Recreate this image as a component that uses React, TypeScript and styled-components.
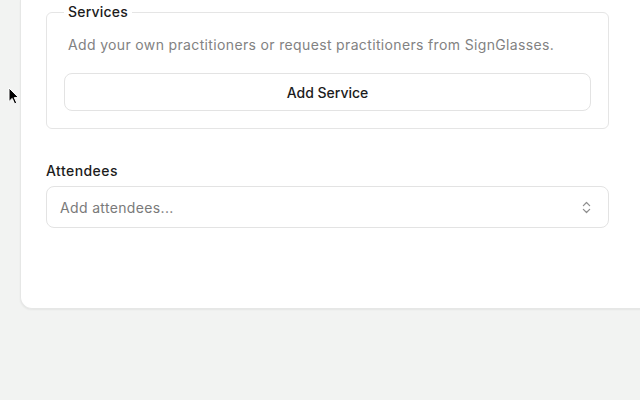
import React from "react";
import styled, { createGlobalStyle } from "styled-components";

const GlobalStyle = createGlobalStyle`
  html, body {
    margin: 0;
    padding: 0;
    background: #f2f3f2;
    font-family: Inter, "Liberation Sans", sans-serif;
    overflow: hidden;
  }
`;

const Page = styled.div`
  position: relative;
  width: 640px;
  height: 400px;
  padding-left: 20px;
  box-sizing: border-box;
  overflow: hidden;
`;

const Card = styled.div`
  width: 640px;
  box-sizing: border-box;
  background: #fff;
  border: 1px solid #e6e7e6;
  border-top: none;
  border-radius: 0 0 12px 12px;
  box-shadow: 0 1px 2px rgba(0, 0, 0, 0.06);
  padding: 2px 50px 80px 25px;
`;

const Fieldset = styled.fieldset`
  margin: 0;
  border: 1px solid #e5e5e5;
  border-radius: 6px;
  padding: 0 17px 17px;
  display: flex;
  flex-direction: column;
`;

const Legend = styled.legend`
  padding: 0 4px;
  font-size: 14px;
  line-height: 20px;
  font-weight: 500;
  letter-spacing: 0.2px;
  color: #1c1c1c;
`;

const Description = styled.p`
  margin: 13px 0 18px;
  padding: 0 4px;
  font-size: 14px;
  line-height: 20px;
  letter-spacing: 0.35px;
  color: #828282;
`;

const Button = styled.button`
  height: 38px;
  border: 1px solid #e3e3e3;
  border-radius: 8px;
  background: #fff;
  font-family: inherit;
  font-size: 14px;
  font-weight: 500;
  color: #1c1c1c;
  cursor: pointer;
`;

const Field = styled.div`
  margin-top: 32px;
  display: flex;
  flex-direction: column;
  gap: 5px;
`;

const Label = styled.label`
  font-size: 14px;
  line-height: 20px;
  font-weight: 500;
  letter-spacing: 0.45px;
  color: #1c1c1c;
`;

const Select = styled.div`
  height: 42px;
  box-sizing: border-box;
  border: 1px solid #e3e3e3;
  border-radius: 8px;
  display: flex;
  align-items: center;
  justify-content: space-between;
  padding: 0 14px 0 13px;
  font-size: 14px;
  letter-spacing: 0.35px;
  color: #7a7a7a;
`;

const Cursor = styled.svg`
  position: absolute;
  left: 8px;
  top: 87px;
`;

const ChevronsUpDown = () => (
  <svg width="15" height="15" viewBox="0 0 24 24" fill="none" stroke="#8f8f8f" strokeWidth="2" strokeLinecap="round" strokeLinejoin="round">
    <path d="m7 15 5 5 5-5" />
    <path d="m7 9 5-5 5 5" />
  </svg>
);

const App: React.FC = () => {
  return (
    <Page>
      <GlobalStyle />
      <Card>
        <Fieldset>
          <Legend>Services</Legend>
          <Description>Add your own practitioners or request practitioners from SignGlasses.</Description>
          <Button>Add Service</Button>
        </Fieldset>
        <Field>
          <Label>Attendees</Label>
          <Select>
            <span>Add attendees...</span>
            <ChevronsUpDown />
          </Select>
        </Field>
      </Card>
      <Cursor width="12" height="18" viewBox="0 0 12 18">
        <path d="M1 1 L1 14.5 L4.2 11.4 L6.6 16.8 L8.7 15.9 L6.3 10.6 L10.5 10.6 Z" fill="#000" stroke="#fff" strokeWidth="1" strokeLinejoin="round" />
      </Cursor>
    </Page>
  );
};

export default App;
